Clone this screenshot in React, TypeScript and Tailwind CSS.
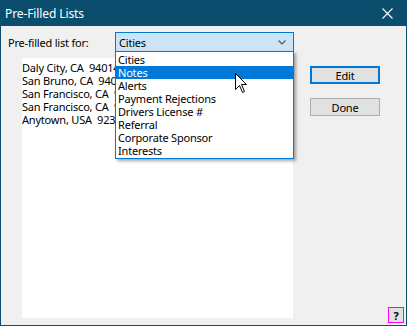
const options = [
  'Cities',
  'Notes',
  'Alerts',
  'Payment Rejections',
  'Drivers License #',
  'Referral',
  'Corporate Sponsor',
  'Interests',
]

const addresses = [
  'Daly City, CA  94014',
  'San Bruno, CA  94066',
  'San Francisco, CA  94102',
  'San Francisco, CA  94103',
  'Anytown, USA  92345',
]

function Cursor() {
  return (
    <svg width="13" height="21" viewBox="0 0 13 21" className="absolute z-20 left-[234px] top-[47px]">
      <path
        d="M0.5 0.5 L0.5 16.5 L4.5 12.5 L7.5 19.5 L9.5 18.5 L6.5 11.5 L11.5 11.5 Z"
        fill="#fff"
        stroke="#000"
        strokeWidth="1"
      />
    </svg>
  )
}

export default function App() {
  return (
    <div
      className="w-[407px] h-[326px] border border-[#0a4d6d] bg-[#f0f0f0] flex flex-col text-[11px] leading-[13px] tracking-[-0.2px] text-black"
      style={{ fontFamily: '"Noto Sans", sans-serif' }}
    >
      {/* Title bar */}
      <div className="h-[25px] bg-[#0a4d6d] flex items-center justify-between pl-[4px] pr-[13px]">
        <span className="text-white text-[12px] tracking-[-0.1px]">Pre-Filled Lists</span>
        <svg width="11" height="11" viewBox="0 0 11 11">
          <path d="M0.5 0.5 L10.5 10.5 M10.5 0.5 L0.5 10.5" stroke="#fff" strokeWidth="1.1" />
        </svg>
      </div>

      {/* Body */}
      <div className="relative flex-1 flex flex-col pb-[2px]">
        <div className="flex items-center pt-[6px] pl-[7px]">
          <span className="w-[107px]">Pre-filled list for:</span>
          <div className="relative">
            <div className="w-[179px] h-[20px] border border-[#0078d7] bg-[#cce4f7] flex items-center justify-between pl-[3px] pr-[7px]">
              <span>Cities</span>
              <svg width="8" height="5" viewBox="0 0 8 5">
                <path d="M0.5 0.5 L4 4 L7.5 0.5" fill="none" stroke="#555" strokeWidth="1.2" />
              </svg>
            </div>
            {/* Open dropdown */}
            <div className="absolute left-0 top-[19px] z-10 w-[179px] border border-[#0078d7] bg-white py-[1px] shadow-[2px_2px_3px_rgba(0,0,0,0.35)]">
              {options.map((o, i) => (
                <div
                  key={o}
                  className={`h-[13px] pl-[2px] leading-[13px] whitespace-nowrap ${
                    i === 1 ? 'bg-[#0078d7] text-white' : ''
                  }`}
                >
                  {o}
                </div>
              ))}
            </div>
          </div>
        </div>

        <div className="flex flex-1 pt-[6px]">
          <div className="ml-[21px] w-[271px] h-[260px] bg-white pt-[3px] overflow-hidden">
            {addresses.map((a) => (
              <div key={a} className="whitespace-pre leading-[13px]">
                {a}
              </div>
            ))}
          </div>
          <div className="flex-1 flex flex-col pl-[17px] pr-[2px] pt-[8px]">
            <button className="w-[70px] h-[18px] border-2 border-[#0078d7] bg-[#e1e1e1] flex items-center justify-center">
              Edit
            </button>
            <button className="mt-[14px] w-[70px] h-[18px] border border-[#adadad] bg-[#e1e1e1] flex items-center justify-center">
              Done
            </button>
            <button className="mt-auto self-end w-[16px] h-[16px] border border-[#ff00ff] bg-[#e1e1e1] flex items-center justify-center font-bold text-[11px]">
              ?
            </button>
          </div>
        </div>

        <Cursor />
      </div>
    </div>
  )
}
